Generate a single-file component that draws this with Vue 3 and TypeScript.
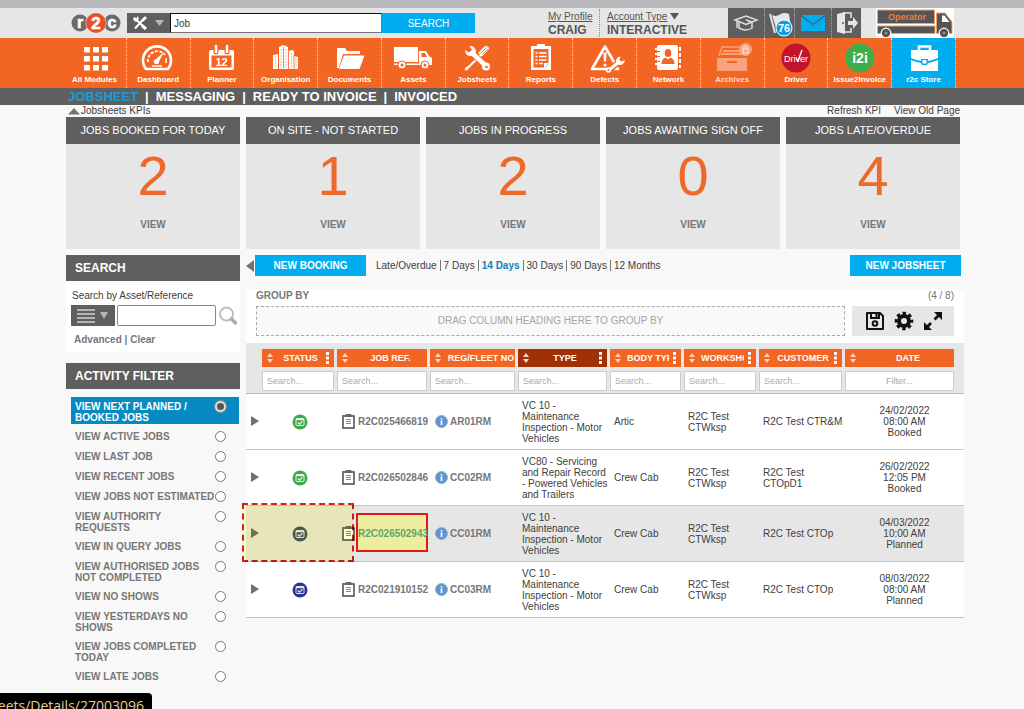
<script setup lang="ts">
import { ref } from 'vue'

interface Module { id: string; label: string; active?: boolean }
interface Column { title: string; menu: boolean; sorted?: boolean; placeholder: string }
interface Job {
  tone: string
  job: string
  reg: string
  type: string
  body: string
  workshop: string
  customer: string
  date: string
  marked?: boolean
}

const modules: Module[] = [
  { id: 'all', label: 'All Modules' },
  { id: 'dashboard', label: 'Dashboard' },
  { id: 'planner', label: 'Planner' },
  { id: 'organisation', label: 'Organisation' },
  { id: 'documents', label: 'Documents' },
  { id: 'assets', label: 'Assets' },
  { id: 'jobsheets', label: 'Jobsheets' },
  { id: 'reports', label: 'Reports' },
  { id: 'defects', label: 'Defects' },
  { id: 'network', label: 'Network' },
  { id: 'archives', label: 'Archives' },
  { id: 'driver', label: 'Driver' },
  { id: 'i2i', label: 'Issue2Invoice' },
  { id: 'store', label: 'r2c Store', active: true },
]

const tabs = ['JOBSHEET', 'MESSAGING', 'READY TO INVOICE', 'INVOICED']

const kpis = [
  { title: 'JOBS BOOKED FOR TODAY', value: 2 },
  { title: 'ON SITE - NOT STARTED', value: 1 },
  { title: 'JOBS IN PROGRESS', value: 2 },
  { title: 'JOBS AWAITING SIGN OFF', value: 0 },
  { title: 'JOBS LATE/OVERDUE', value: 4 },
]

const filters = [
  'VIEW NEXT PLANNED /\nBOOKED JOBS',
  'VIEW ACTIVE JOBS',
  'VIEW LAST JOB',
  'VIEW RECENT JOBS',
  'VIEW JOBS NOT ESTIMATED',
  'VIEW AUTHORITY\nREQUESTS',
  'VIEW IN QUERY JOBS',
  'VIEW AUTHORISED JOBS\nNOT COMPLETED',
  'VIEW NO SHOWS',
  'VIEW YESTERDAYS NO\nSHOWS',
  'VIEW JOBS COMPLETED\nTODAY',
  'VIEW LATE JOBS',
]
const selectedFilter = ref(0)

const ranges = ['Late/Overdue', '7 Days', '14 Days', '30 Days', '90 Days', '12 Months']
const selectedRange = ref('14 Days')

const columns: Column[] = [
  { title: 'STATUS', menu: true, placeholder: 'Search...' },
  { title: 'JOB REF.', menu: false, placeholder: 'Search...' },
  { title: 'REG/FLEET NO', menu: false, placeholder: 'Search...' },
  { title: 'TYPE', menu: true, sorted: true, placeholder: 'Search...' },
  { title: 'BODY TYPE', menu: true, placeholder: 'Search...' },
  { title: 'WORKSHOP', menu: true, placeholder: 'Search...' },
  { title: 'CUSTOMER', menu: true, placeholder: 'Search...' },
  { title: 'DATE', menu: false, placeholder: 'Filter...' },
]

const inspection = 'VC 10 -\nMaintenance\nInspection - Motor\nVehicles'
const jobs: Job[] = [
  { tone: 'green', job: 'R2C025466819', reg: 'AR01RM', type: inspection, body: 'Artic', workshop: 'R2C Test\nCTWksp', customer: 'R2C Test CTR&M', date: '24/02/2022\n08:00 AM\nBooked' },
  { tone: 'green', job: 'R2C026502846', reg: 'CC02RM', type: 'VC80 - Servicing\nand Repair Record\n- Powered Vehicles\nand Trailers', body: 'Crew Cab', workshop: 'R2C Test\nCTWksp', customer: 'R2C Test\nCTOpD1', date: '26/02/2022\n12:05 PM\nBooked' },
  { tone: 'slate', job: 'R2C026502943', reg: 'CC01RM', type: inspection, body: 'Crew Cab', workshop: 'R2C Test\nCTWksp', customer: 'R2C Test CTOp', date: '04/03/2022\n10:00 AM\nPlanned', marked: true },
  { tone: 'navy', job: 'R2C021910152', reg: 'CC03RM', type: inspection, body: 'Crew Cab', workshop: 'R2C Test\nCTWksp', customer: 'R2C Test CTOp', date: '08/03/2022\n08:00 AM\nPlanned' },
]

const query = ref('Job')
const assetQuery = ref('')
</script>

<template>
  <div class="page">
    <div class="strip"></div>

    <header class="top">
      <svg class="logo" viewBox="0 0 50 22" aria-label="r2c">
        <circle cx="9" cy="11" r="8.5" fill="#6b6b6b" />
        <circle cx="41" cy="11" r="8.5" fill="#6b6b6b" />
        <circle cx="25" cy="11" r="10.5" fill="#e6e6e6" />
        <circle cx="25" cy="11" r="10" fill="#e8502a" />
        <g fill="#fff" stroke="#fff" stroke-width=".6" font-weight="bold" text-anchor="middle">
          <text x="9" y="15.500" font-size="16">r</text>
          <text x="25" y="17" font-size="17">2</text>
          <text x="41" y="15.500" font-size="16">c</text>
        </g>
      </svg>
      <form class="global-search" @submit.prevent>
        <button type="button" class="scope" aria-label="Search scope">
          <svg viewBox="0 0 43 20" width="43" height="20">
            <path d="M8 5.500L18 15M17.500 5L8 15.500" stroke="#fff" stroke-width="2" />
            <path d="M6 5.500L7.500 4l2 1.500L10.500 3 12 5.500 10 8.500 7.500 8.500z" fill="#fff" />
            <path d="M14.500 7L18 3l2 2-3.500 3.500z" fill="#fff" />
            <path d="M15 12.500l4 3.500" stroke="#fff" stroke-width="3" />
            <path d="M28 7h9l-4.500 6z" fill="#b9b9b9" />
          </svg>
        </button>
        <input v-model="query" type="text" aria-label="Search" />
        <button type="submit" class="go">SEARCH</button>
      </form>

      <div class="profile">
        <div>
          <a href="#">My Profile</a>
          <strong>CRAIG</strong>
        </div>
        <div class="account">
          <a href="#">Account Type</a>
          <svg viewBox="0 0 9 7" width="9" height="7"><path d="M0 0h9L4.500 6.500z" fill="#555" /></svg>
          <strong>INTERACTIVE</strong>
        </div>
      </div>

      <div class="quick">
        <button type="button" aria-label="Training">
          <svg viewBox="0 0 26 20" width="26" height="20" fill="none" stroke="#ddd" stroke-width="1.500">
            <path d="M2 7L13 3l11 4-11 4.500z" />
            <path d="M6 9v6q7 4 13 0V9M4 8v7M13 7l6 2" />
          </svg>
        </button>
        <button type="button" aria-label="Flags">
          <svg viewBox="0 0 26 28" width="26" height="28">
            <path d="M3 5l5 19" stroke="#e6e6e6" stroke-width="2" />
            <path d="M5 6q4 2 8-.5t9-.5l2 14q-5-2-8 0t-7 0z" fill="#e6e6e6" />
            <circle cx="17" cy="19" r="8" fill="#0b9fe0" stroke="#fff" />
            <text x="17" y="23" text-anchor="middle" font-size="11" font-weight="bold" fill="#fff">76</text>
          </svg>
        </button>
        <button type="button" class="wide" aria-label="Messages">
          <svg viewBox="0 0 26 18" width="26" height="18">
            <rect x="1" y="1" width="24" height="16" fill="#00adef" />
            <path d="M1 1.500l12 9 12-9" fill="none" stroke="#47606c" stroke-width="1.200" />
          </svg>
        </button>
        <button type="button" aria-label="Log out">
          <svg viewBox="0 0 24 24" width="24" height="24">
            <path d="M8 2h8v5M16 17v4H8" fill="none" stroke="#e6e6e6" stroke-width="1.500" />
            <path d="M2 3l8-2v22l-8-2z" fill="#e6e6e6" />
            <path d="M13 10h5V6l5 6-5 6v-4h-5z" fill="#e6e6e6" />
            <circle cx="8" cy="12" r="1" fill="#5f5f5f" />
          </svg>
        </button>
      </div>

      <svg class="operator" viewBox="0 0 78 30" width="78" height="30" aria-label="Operator">
        <rect width="78" height="30" fill="#fff" />
        <g fill="#555" stroke="#f3a070" stroke-width="1">
          <rect x="1.500" y="2" width="57" height="13.500" />
          <path d="M1.500 18H59V25.500H1.500z" />
          <path d="M60.500 5H69L76 14V25.500H60.500z" />
        </g>
        <path d="M66 7.500h2.500l5 6.500H66z" fill="#fff" />
        <g fill="#555" stroke="#fff" stroke-width="1.200">
          <circle cx="10" cy="25" r="4.800" />
          <circle cx="68" cy="25" r="4.800" />
        </g>
        <circle cx="10" cy="25" r="1.200" fill="#999" /><circle cx="68" cy="25" r="1.200" fill="#999" />
        <text x="31" y="12" text-anchor="middle" font-size="9" font-weight="bold" fill="#f37a32">Operator</text>
      </svg>
    </header>

    <nav class="modules" aria-label="Modules">
      <ul>
        <li v-for="m in modules" :key="m.id" :class="{ active: m.active, faded: m.id === 'archives' }">
          <a href="#">
            <svg viewBox="0 0 40 30" width="40" height="30" fill="#fff">
              <template v-if="m.id === 'all'">
                <template v-for="r in 3" :key="r">
                  <rect v-for="c in 3" :key="c" :x="c * 9 + 1" :y="r * 9 - 5" width="6" height="5.500" />
                </template>
              </template>
              <g v-else-if="m.id === 'dashboard'">
                <path d="M8 26A14 14 0 1 1 30 26Z" fill="none" stroke="#fff" stroke-width="2.600" stroke-linejoin="round" />
                <path d="M10 19A9.500 9.500 0 0 1 27 12" fill="none" stroke="#fff" stroke-width="1.800" stroke-dasharray="3 1.500" />
                <path d="M26 9L20.500 19.500L17 17Z" />
                <circle cx="18.500" cy="18.500" r="2.600" />
                <path d="M14 23h10M28 15v5" stroke="#fff" stroke-width="1.500" />
              </g>
              <g v-else-if="m.id === 'planner'">
                <path fill-rule="evenodd" d="M9 7H30Q32 7 32 9V25Q32 27 30 27H9Q7 27 7 25V9Q7 7 9 7ZM9.500 12.500V24.500H29.500V12.500Z" />
                <path d="M14 3v6M25 3v6" stroke="#f36523" stroke-width="5" stroke-linecap="round" />
                <path d="M14 3v6M25 3v6" stroke="#fff" stroke-width="2.500" stroke-linecap="round" />
                <text x="19.500" y="22.500" text-anchor="middle" font-size="11" font-weight="bold">12</text>
              </g>
              <g v-else-if="m.id === 'organisation'">
                <path d="M7 12l5-1v15H7zM13 4l4-2 5 2v22h-9zM22 8l4-1 2 1v18h-6zM28 13l4 1v12h-4z" />
                <path d="M12.500 5v21M17.500 4v21M22.500 8v18M28 12v14" stroke="#f36523" stroke-width=".8" />
                <path d="M15 6v19M20 6v19M9.500 13v12M25.500 10v15M30 15v10" stroke="#f9a680" stroke-width=".8" stroke-dasharray="2 1" />
              </g>
              <g v-else-if="m.id === 'documents'">
                <path d="M7 25V5h8l2 3h13v3H13L9 25z" />
                <path d="M14 12.500H34.500L29.500 26H9z" />
              </g>
              <g v-else-if="m.id === 'assets'">
                <path d="M1 4H25V19H1z" />
                <path fill-rule="evenodd" d="M26 8H33L36 13L39 15V22H26zM28.500 10V14H34L32 10z" />
                <path d="M1 20.500H26V22H1z" />
                <g stroke="#f36523" stroke-width="1"><circle cx="9" cy="22" r="4" /><circle cx="32" cy="22" r="4" /></g>
                <g fill="#f36523"><circle cx="9" cy="22" r="1.500" /><circle cx="32" cy="22" r="1.500" /></g>
              </g>
              <g v-else-if="m.id === 'jobsheets'">
                <path d="M9 26.500L24 12" stroke="#fff" stroke-width="2" />
                <path d="M7.500 27.500l1-3 3-1.500 1 1.500-2 2.500z" />
                <path d="M21 10L28 3Q32 2.500 32 6L25 13.500z" />
                <path d="M23.500 10.500l6-6M25.500 11.500l5-5.500" stroke="#f36523" stroke-width=".8" />
                <path d="M14 9L29 23" stroke="#f36523" stroke-width="6" />
                <path d="M14 9L29 23" stroke="#fff" stroke-width="4.500" />
                <path d="M12.500 3Q18 3 19 8Q18 13 13 13Q8 12.500 8 7L12 9.500L15 7z" />
                <circle cx="29" cy="23.500" r="4" /><circle cx="29.500" cy="24" r="1.300" fill="#f36523" />
              </g>
              <g v-else-if="m.id === 'reports'">
                <path fill-rule="evenodd" d="M10 3H30V27H10zM12.500 6V24.500H24L27.500 21V6z" />
                <rect x="16" y="1" width="8" height="5" rx="1" />
                <path d="M14.500 10h2M18 10h7.500M14.500 13.500h2M18 13.500h7.500M14.500 17h2M18 17h7.500M14.500 20.500h2M18 20.500h4" stroke="#fff" stroke-width="1.300" />
                <path d="M23 25v-5h5z" />
              </g>
              <g v-else-if="m.id === 'defects'">
                <path d="M20 3.500L33 26H7z" fill="none" stroke="#fff" stroke-width="2.600" stroke-linejoin="round" />
                <path d="M18.300 9.500h3.400l-.7 9h-2z" /><circle cx="20" cy="22" r="1.600" />
                <path d="M24 27.500L36 17" stroke="#f36523" stroke-width="6" />
                <path d="M24 27L34 19" stroke="#fff" stroke-width="3" stroke-linecap="round" />
                <path d="M31 18.500Q31 14 35.500 13.500L34.500 17L36.500 18.500L40 17Q39 22.500 34 22z" />
                <circle cx="23.500" cy="27" r="2.800" /><circle cx="23.500" cy="27" r="1" fill="#f36523" />
              </g>
              <g v-else-if="m.id === 'network'">
                <rect x="9" y="2" width="21" height="25" rx="2" />
                <path d="M7 6h5M7 11h5M7 16h5M7 21h5" stroke="#fff" stroke-width="2" />
                <path d="M9 8.500h3M9 13.500h3M9 18.500h3" stroke="#f36523" stroke-width="1" />
                <path d="M32 4v4M32 10v4M32 16v4M32 22v3" stroke="#fff" stroke-width="2" />
                <ellipse cx="20" cy="10" rx="3.300" ry="4" fill="#f36523" />
                <path d="M13.500 21q0-5 4-6.500l2.500 2 2.500-2q4 1.500 4 6.500z" fill="#f36523" />
              </g>
              <g v-else-if="m.id === 'archives'">
                <g opacity=".4">
                  <path d="M5 15H35V28H5z" />
                  <path d="M7 13L10 4H28L33 13" fill="none" stroke="#fff" stroke-width="1.500" />
                  <path d="M9 10h22v2H9zM11 7h18v2H11z" />
                </g>
                <rect x="15" y="18" width="10" height="2" fill="#f36523" />
                <circle cx="33.500" cy="6.500" r="6.500" fill="#f9a680" />
                <g fill="none" stroke="#fbe0d3" stroke-width="1.200"><rect x="31" y="6" width="5" height="4" /><path d="M31.800 5.500V4q1.700-2.500 3.400 0v1.500" /></g>
              </g>
              <g v-else-if="m.id === 'driver'">
                <circle cx="20" cy="15" r="14.500" fill="#c4142c" />
                <text x="20" y="18.500" text-anchor="middle" font-size="9" font-weight="normal">Driver</text>
                <path d="M20 15l2 3 4-11" fill="none" stroke="#fff" stroke-width="1.300" />
              </g>
              <g v-else-if="m.id === 'i2i'">
                <circle cx="20" cy="15" r="14.500" fill="#3fae49" />
                <text x="20" y="19.500" text-anchor="middle" font-size="14" font-weight="bold">i2i</text>
              </g>
              <g v-else>
                <path d="M15 7V3.500H26V7" fill="none" stroke="#fff" stroke-width="2.600" />
                <path d="M8 7H33Q34 7 34 8V15Q28 17.500 24 18V16H17V18Q13 17.500 7 15V8Q7 7 8 7z" />
                <path d="M7 17Q13 19.500 17 20L18 22H23L24 20Q28 19.500 34 17V28H7z" />
                <path d="M18.500 17h4v3.500h-4z" />
              </g>
            </svg>
            <span>{{ m.label }}</span>
          </a>
        </li>
      </ul>
    </nav>

    <nav class="tabs" aria-label="Jobsheet sections">
      <template v-for="(t, i) in tabs" :key="t">
        <i v-if="i">|</i>
        <a href="#" :class="{ current: i === 0 }">{{ t }}</a>
      </template>
    </nav>

    <main>
      <div class="kpi-bar">
        <button type="button">
          <svg viewBox="0 0 12 8" width="12" height="8"><path d="M0 7.500L6 1l6 6.500z" fill="#7a7072" /></svg>Jobsheets KPIs
        </button>
        <span>
          <a href="#">Refresh KPI</a>
          <a href="#">View Old Page</a>
        </span>
      </div>

      <section class="kpis">
        <article v-for="k in kpis" :key="k.title">
          <h2>{{ k.title }}</h2>
          <p>{{ k.value }}</p>
          <a href="#">VIEW</a>
        </article>
      </section>

      <div class="columns">
        <aside>
          <h2>SEARCH</h2>
          <form class="asset" @submit.prevent>
            <label for="asset">Search by Asset/Reference</label>
            <div class="asset-row">
              <button type="button" class="list" aria-label="Search field">
                <svg viewBox="0 0 44 21" width="44" height="21">
                  <path d="M6 5h18M6 9h18M6 13h18M6 17h18" stroke="#b5b5b5" stroke-width="2" />
                  <path d="M29 7h8l-4 7z" fill="#b5b5b5" />
                </svg>
              </button>
              <input id="asset" v-model="assetQuery" type="text" />
              <button type="submit" class="find" aria-label="Find">
                <svg viewBox="0 0 20 20" width="20" height="20">
                  <circle cx="8.500" cy="8" r="6.500" fill="#fff" stroke="#bbb" stroke-width="1.800" />
                  <path d="M13.500 13l4 4" stroke="#aaa" stroke-width="3.500" stroke-linecap="round" />
                </svg>
              </button>
            </div>
            <p><a href="#">Advanced</a> | <a href="#">Clear</a></p>
          </form>

          <h2>ACTIVITY FILTER</h2>
          <ul class="filters">
            <li v-for="(f, i) in filters" :key="f" :class="{ on: selectedFilter === i }">
              <label>
                <span>{{ f }}</span>
                <input v-model="selectedFilter" type="radio" name="activity" :value="i" />
              </label>
            </li>
          </ul>
        </aside>

        <section class="work">
          <div class="actions">
            <button type="button" class="collapse" aria-label="Collapse sidebar">
              <svg viewBox="0 0 9 12" width="9" height="12"><path d="M8 0v12L0 6z" fill="#7a7072" /></svg>
            </button>
            <button type="button" class="primary">NEW BOOKING</button>
            <div class="ranges">
              <template v-for="(r, i) in ranges" :key="r">
                <i v-if="i"></i>
                <a href="#" :class="{ current: r === selectedRange }" @click.prevent="selectedRange = r">{{ r }}</a>
              </template>
            </div>
            <button type="button" class="primary end">NEW JOBSHEET</button>
          </div>

          <div class="group">
            <div class="group-head"><span>GROUP BY</span><em>(4 / 8)</em></div>
            <div class="group-row">
              <div class="drop">DRAG COLUMN HEADING HERE TO GROUP BY</div>
              <div class="tools">
                <button type="button" aria-label="Save layout">
                  <svg viewBox="0 0 20 20" width="20" height="20" fill="none" stroke="#111" stroke-width="2">
                    <path d="M2 2H15L18 5V18H2z" stroke-linejoin="round" />
                    <path d="M6 2v5h8V2" /><circle cx="10" cy="12.500" r="2.300" /><path d="M11.500 3v3" />
                  </svg>
                </button>
                <button type="button" aria-label="Settings">
                  <svg viewBox="0 0 20 20" width="20" height="20" fill="none" stroke="#111">
                    <circle cx="10" cy="10" r="5" stroke-width="4" />
                    <circle cx="10" cy="10" r="7.800" stroke-width="3" stroke-dasharray="3.400 2.726" stroke-dashoffset="1.700" />
                  </svg>
                </button>
                <button type="button" aria-label="Full screen">
                  <svg viewBox="0 0 20 20" width="20" height="20" fill="#111">
                    <path d="M11 1h8v8l-3-3-3.500 3.500-2-2L14 4zM9 19H1v-8l3 3 3-3 2 2-3 3z" />
                  </svg>
                </button>
              </div>
            </div>
          </div>

          <table>
            <colgroup>
              <col class="c-open" /><col class="c-status" /><col class="c-job" /><col class="c-reg" /><col class="c-type" />
              <col class="c-body" /><col class="c-work" /><col class="c-cust" /><col class="c-date" />
            </colgroup>
            <thead>
              <tr class="heads">
                <td></td>
                <th v-for="c in columns" :key="c.title" scope="col">
                  <div class="head" :class="{ sorted: c.sorted }">
                    <button type="button" class="sort" :aria-label="'Sort by ' + c.title">
                      <svg viewBox="0 0 6 10" width="6" height="10" fill="#ffd3bd"><path d="M0 4l3-4 3 4zM0 6h6l-3 4z" /></svg>
                    </button>
                    <span>{{ c.title }}</span>
                    <button v-if="c.menu" type="button" class="menu" :aria-label="c.title + ' options'">
                      <svg viewBox="0 0 3 12" width="3" height="12" fill="#fff"><path d="M0 0h3v3H0zM0 4.500h3v3H0zM0 9h3v3H0z" /></svg>
                    </button>
                  </div>
                </th>
              </tr>
              <tr class="search">
                <td></td>
                <td v-for="c in columns" :key="c.title">
                  <input type="text" :placeholder="c.placeholder" :aria-label="'Filter ' + c.title" />
                </td>
              </tr>
            </thead>
            <tbody>
              <tr v-for="j in jobs" :key="j.job" :class="{ marked: j.marked }">
                <td class="open">
                  <button type="button" :aria-label="'Expand ' + j.job">
                    <svg viewBox="0 0 8 10" width="8" height="10"><path d="M0 0l8 5-8 5z" fill="#6e6e6e" /></svg>
                  </button>
                  <div v-if="j.marked" class="mark-area"></div>
                </td>
                <td class="status">
                  <svg viewBox="0 0 16 16" width="16" height="16" :class="j.tone">
                    <circle cx="8" cy="8" r="7.500" />
                    <rect x="4" y="4.500" width="8" height="7" rx="1" fill="none" stroke="#fff" opacity=".85" />
                    <path d="M4 5.500h8M5.800 8.500l1.700 1.700 3-3" fill="none" stroke="#fff" stroke-width="1.300" opacity=".85" />
                  </svg>
                </td>
                <td class="job">
                  <div v-if="j.marked" class="mark-ref"></div>
                  <div class="pair">
                    <svg viewBox="0 0 13 15" width="13" height="15">
                      <rect x="1" y="2" width="11" height="12" fill="#fff" stroke="#666" stroke-width="1.800" />
                      <path d="M3.500 0h6v3h-6z" fill="#666" />
                      <path d="M4 5.500h5M4 7.500h5M4 9.500h5" stroke="#888" />
                    </svg>
                    <a href="#">{{ j.job }}</a>
                  </div>
                </td>
                <td class="reg">
                  <div class="pair">
                    <svg viewBox="0 0 13 13" width="13" height="13">
                      <circle cx="6.500" cy="6.500" r="6" fill="#5f94cf" stroke="#8aaed6" />
                      <path d="M6.500 5.500v4.500M6.500 3v1.500" stroke="#fff" stroke-width="1.700" />
                    </svg>
                    <a href="#">{{ j.reg }}</a>
                  </div>
                </td>
                <td>{{ j.type }}</td>
                <td>{{ j.body }}</td>
                <td>{{ j.workshop }}</td>
                <td>{{ j.customer }}</td>
                <td class="date">{{ j.date }}</td>
              </tr>
            </tbody>
          </table>
        </section>
      </div>
    </main>

    <div class="link-status">heets/Details/27003096</div>
  </div>
</template>

<style>
html,
body {
  margin: 0;
  background: #f8f8f8;
  overflow: hidden;
}
</style>

<style scoped>
.page {
  font-family: "Liberation Sans", Arial, sans-serif;
  font-size: 10px;
  line-height: 11px;
  color: #404040;
}
button,
input {
  font: inherit;
  color: inherit;
  margin: 0;
  padding: 0;
  border: 0;
  background: none;
  box-sizing: border-box;
  border-radius: 0;
}
a { color: inherit; text-decoration: none; }
ul { list-style: none; margin: 0; padding: 0; }
h2, p { margin: 0; }
svg { display: block; flex: none; }

.strip { height: 8px; background: #b9b9bd; }

.top {
  display: flex;
  align-items: center;
  height: 30px;
  padding: 0 70px 0 71px;
  background: #e6e6e6;
}
.logo { width: 50px; height: 22px; margin-right: 6px; }
.global-search { display: flex; height: 20px; }
.scope { width: 43px; background: #5f5f5f; }
.global-search input {
  width: 212px;
  padding: 0 3px;
  background: #fff;
  border: 1px solid #777;
  border-top-color: #111;
  border-left-color: #111;
}
.go { width: 93px; background: #00adef; color: #fff; }
.profile { display: flex; margin-left: auto; margin-right: 38px; color: #555; }
.profile > div { width: 51px; line-height: 12px; padding-top: 2px; }
.profile a { text-decoration: underline; }
.profile strong { display: block; font-size: 12px; line-height: 14px; }
.profile .account { width: 83px; border-left: 1px dotted #888; padding-left: 7px; }
.account svg { display: inline-block; margin-left: 3px; }
.quick { display: flex; height: 30px; margin-right: 15px; background: #5f5f5f; }
.quick button {
  display: flex;
  align-items: center;
  justify-content: center;
  width: 30px;
  border-left: 1px dotted #aaa;
}
.quick button:first-child { width: 36px; border-left: 0; }
.quick .wide { width: 37px; }

.modules { background: #f36523; padding: 0 68px 0 63px; }
.modules ul { display: grid; grid-template-columns: repeat(14, 1fr); }
.modules li { border-right: 1px dotted #fcd0bb; }
.modules a {
  display: flex;
  flex-direction: column;
  align-items: center;
  padding: 5px 0 2px;
  color: #fff;
  font-size: 8px;
  font-weight: bold;
  line-height: 13px;
  white-space: nowrap;
}
.modules .active { background: #00adef; }
.modules .faded span { color: #ffdccb; }

.tabs {
  display: flex;
  gap: 7px;
  padding: 0 68px;
  background: #5f5f5f;
  color: #fff;
  font-size: 13px;
  font-weight: bold;
  line-height: 17px;
}
.tabs i { font-style: normal; }
.tabs .current { color: #1c9ad6; }

main { padding: 0 60px 0 66px; }
.kpi-bar { display: flex; justify-content: space-between; padding: 0 4px 0 2px; line-height: 12px; }
.kpi-bar button { display: flex; align-items: center; gap: 1px; }
.kpi-bar span { display: flex; gap: 13px; }

.kpis { display: grid; grid-template-columns: repeat(5, 1fr); gap: 6px; margin-right: 4px; }
.kpis article { background: #e6e6e6; text-align: center; padding-bottom: 18px; }
.kpis h2 { background: #5f5f5f; color: #fff; font-size: 11px; font-weight: normal; line-height: 27px; }
.kpis p { color: #ee6a2a; font-size: 56px; line-height: 64px; padding-bottom: 11px; }
.kpis a { display: block; color: #777; font-weight: bold; line-height: 12px; }

.columns { display: grid; grid-template-columns: 174px minmax(0, 1fr); gap: 6px; padding-top: 6px; }

aside h2 { background: #5f5f5f; color: #fff; font-size: 12px; line-height: 26px; padding-left: 9px; }
.asset { background: #fff; padding: 9px 2px 6px 5px; margin-bottom: 11px; }
.asset label { display: block; line-height: 12px; padding-left: 1px; }
.asset-row { display: flex; align-items: center; margin: 3px 0 8px; gap: 2px; }
.list { background: #5f5f5f; }
.asset-row input { flex: 1; min-width: 0; height: 21px; border: 1px solid #888; border-radius: 2px; background: #fff; padding: 0 3px; }
.asset p { color: #777; font-weight: bold; line-height: 12px; padding-left: 3px; }

.filters { padding: 8px 1px 0 5px; color: #777; font-weight: bold; }
.filters label { display: flex; justify-content: space-between; padding: 4px 13px 4px 4px; }
.filters span { white-space: pre; min-height: 12px; }
.filters li.on { background: #058ac2; color: #fff; margin-bottom: 3px; }
.filters li.on label { padding-bottom: 1px; }
.filters input {
  appearance: none;
  flex: none;
  width: 11px;
  height: 11px;
  border: 1px solid #777;
  border-radius: 50%;
  background: #fff;
}
.filters input:checked { border: 2px solid #ddd; background: #555; box-shadow: 0 0 0 1px #8a8a8a; }

.actions { display: flex; align-items: center; padding-right: 3px; height: 21px; }
.primary { width: 111px; height: 21px; background: #00adef; color: #fff; font-weight: bold; }
.end { margin-left: auto; }
.ranges { display: flex; gap: 3px; padding-left: 10px; }
.ranges i { border-left: 1px solid #777; }
.ranges .current { color: #0a86bd; font-weight: bold; }

.group { background: #fff; margin-top: 14px; padding: 0 10px 7px; }
.group-head { display: flex; justify-content: space-between; line-height: 12px; color: #777; font-weight: bold; padding-bottom: 4px; }
.group-head em { font-style: normal; font-weight: normal; }
.group-row { display: flex; gap: 7px; }
.drop {
  flex: 1;
  box-sizing: border-box;
  border: 1px dashed #aaa;
  background: #f9f9f9;
  color: #a5a5a5;
  text-align: center;
  line-height: 28px;
}
.tools { display: flex; align-items: center; gap: 9px; padding: 0 11px 0 13px; background: #e6e6e6; }

table { width: 100%; table-layout: fixed; border-collapse: separate; border-spacing: 0; background: #fff; }
.c-open { width: 16px; }
.c-status { width: 75px; }
.c-job { width: 93px; }
.c-reg { width: 88px; }
.c-type { width: 92px; }
.c-body { width: 74px; }
.c-work { width: 75px; }
.c-cust { width: 86px; }
.c-date { width: 119px; }
thead { background: #e6e6e6; }
thead th, thead td { padding: 0 3px 0 0; }
thead th:last-child, thead td:last-child { padding-right: 10px; }
thead th { padding-top: 6px; }
.head { display: flex; align-items: center; height: 18px; background: #f36523; color: #fff; font-size: 9px; }
.head.sorted { background: #a03008; }
.sort { width: 17px; padding-left: 5px; flex: none; }
.head span { flex: 1; min-width: 0; overflow: hidden; white-space: nowrap; }
.menu { width: 12px; padding-left: 4px; flex: none; }
.search td { padding-top: 4px; padding-bottom: 2px; border-bottom: 1px solid #bbb; }
.search input { display: block; width: 100%; height: 20px; border: 1px solid #ccc; background: #fff; padding: 0 4px; font-size: 9px; }
.search input::placeholder { color: #aaa; opacity: 1; }
.search td:last-child input { text-align: center; }

tbody td {
  position: relative;
  height: 55px;
  box-sizing: content-box;
  padding: 0 0 0 4px;
  border-bottom: 1px solid #c4c4c4;
  vertical-align: middle;
  white-space: pre-line;
}
tbody td.open { padding-left: 5px; }
tbody td.job, tbody td.reg { padding-left: 5px; color: #777; font-weight: bold; }
tbody td.status svg { margin-left: 26px; }
tbody td.date { text-align: center; padding: 0; }
.pair { display: flex; align-items: center; gap: 3px; position: relative; }
.reg .pair { gap: 2px; }
.green { fill: #3fa94c; }
.slate { fill: #4a5866; }
.navy { fill: #2b3593; }
.marked { background: #e6e6e6; }
.marked .job a { color: #5ea568; }
.mark-area {
  position: absolute;
  z-index: 2;
  left: -4px;
  top: -3px;
  width: 112px;
  height: 59px;
  box-sizing: border-box;
  border: 2px dashed #d02222;
  background: #fffFce;
  mix-blend-mode: multiply;
}
.mark-ref {
  position: absolute;
  left: 19px;
  top: 7px;
  width: 72px;
  height: 39px;
  box-sizing: border-box;
  border: 2px solid #e81616;
  background: #ededa0;
}
.link-status {
  position: fixed;
  left: 0;
  bottom: 0;
  width: 152px;
  height: 16px;
  box-sizing: border-box;
  display: flex;
  justify-content: flex-end;
  overflow: hidden;
  padding: 3px 8px 0 0;
  background: #000;
  border-top-right-radius: 4px;
  color: #e2cb96;
  font-family: "Open Sans", sans-serif;
  font-size: 14px;
  line-height: 20px;
}
</style>
